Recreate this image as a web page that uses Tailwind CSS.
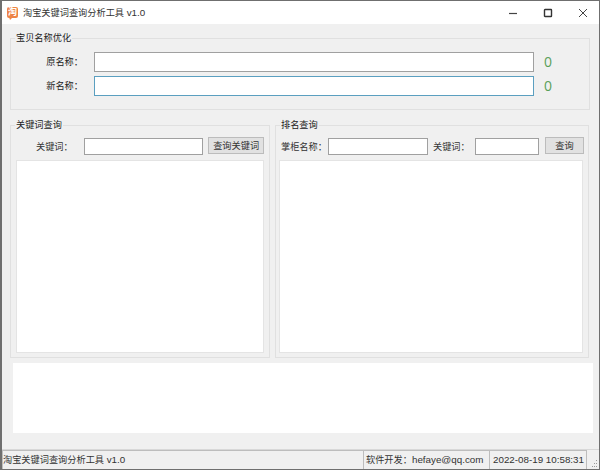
<!DOCTYPE html>
<html lang="zh-CN">
<head>
  <meta charset="UTF-8">
  <title>淘宝关键词查询分析工具 v1.0</title>
  <script src="https://cdn.jsdelivr.net/npm/@tailwindcss/browser@4"></script>
</head>
<body class="m-0 bg-[#f0f0f0]">
  <div class="w-[600px] h-[470px] overflow-hidden flex flex-col bg-[#f0f0f0] border-t border-b border-l-2 border-r border-[#6f6f6f] text-[9.2px] leading-[12px] text-[#222] font-['Liberation_Sans','Noto_Sans_CJK_SC',sans-serif]">

    <!-- title bar -->
    <div class="h-[23px] shrink-0 bg-white flex items-center">
      <div class="relative ml-[5px] w-[11px] h-[11px] rounded-[2px] bg-[#ee8446] flex items-center justify-center text-white text-[9px] leading-[11px] font-bold">
        淘
        <svg class="absolute left-[2px] top-[10px] w-[4px] h-[3px]" viewBox="0 0 4 3"><path d="M0 0h4L1 3z" fill="#ee8446"/></svg>
      </div>
      <div class="ml-[5px] text-[#333]">淘宝关键词查询分析工具 <span class="text-[9.8px]">v1.0</span></div>
      <div class="ml-auto flex items-center">
        <svg class="w-[10px] h-[10px] mr-[25px]" viewBox="0 0 10 10"><path d="M1 5.5h8" stroke="#444" stroke-width="1.2" fill="none"/></svg>
        <svg class="w-[10px] h-[10px] mr-[25px]" viewBox="0 0 10 10"><rect x="1.5" y="1.5" width="7" height="7" rx="0.5" stroke="#333" stroke-width="1.4" fill="none"/></svg>
        <svg class="w-[10px] h-[10px] mr-[11px]" viewBox="0 0 10 10"><path d="M1 1l8 8M9 1l-8 8" stroke="#444" stroke-width="1" fill="none"/></svg>
      </div>
    </div>

    <!-- 宝贝名称优化 -->
    <div class="relative mt-[14px] ml-[8px] mr-[9px] h-[72px] shrink-0 border border-[#e0e0e0] flex flex-col gap-[4px] pt-[13px]">
      <span class="absolute left-[4px] top-[-7px] px-[1px] bg-[#f0f0f0]">宝贝名称优化</span>
      <div class="flex items-center h-[20px]">
        <span class="w-[72px] text-right">原名称：</span>
        <div class="ml-[11px] w-[440px] h-[20px] bg-white border border-[#a0a0a0]"></div>
        <span class="ml-[10px] text-[14px] text-[#5a9f5a] font-['Open_Sans',sans-serif]">0</span>
      </div>
      <div class="flex items-center h-[20px]">
        <span class="w-[72px] text-right">新名称：</span>
        <div class="ml-[11px] w-[440px] h-[20px] bg-white border border-[#5b9fc0]"></div>
        <span class="ml-[10px] text-[14px] text-[#5a9f5a] font-['Open_Sans',sans-serif]">0</span>
      </div>
    </div>

    <!-- 查询区 -->
    <div class="mt-[15px] ml-[8px] flex gap-[5px] h-[233px] shrink-0">
      <div class="relative w-[260px] border border-[#e0e0e0] flex flex-col pt-[11px] px-[5px]">
        <span class="absolute left-[4px] top-[-7px] px-[1px] bg-[#f0f0f0]">关键词查询</span>
        <div class="flex items-center h-[19px] text-[#333]">
          <span class="ml-[20px] w-[48px]">关键词：</span>
          <div class="w-[120px] h-[17px] bg-white border border-[#a0a0a0]"></div>
          <div class="ml-[5px] mb-[2px] w-[56px] h-[17px] bg-[#e1e1e1] border border-[#bcbcbc] flex items-center justify-center">查询关键词</div>
        </div>
        <div class="mt-[4px] h-[193px] w-[248px] bg-white border border-[#e4e4e4]"></div>
      </div>
      <div class="relative w-[314px] border border-[#e0e0e0] flex flex-col pt-[11px] px-[3px]">
        <span class="absolute left-[4px] top-[-7px] px-[1px] bg-[#f0f0f0]">排名查询</span>
        <div class="flex items-center h-[19px] text-[#333]">
          <span class="ml-[2px] w-[47px]">掌柜名称：</span>
          <div class="w-[100px] h-[17px] bg-white border border-[#a0a0a0]"></div>
          <span class="ml-[5px] w-[42px]">关键词：</span>
          <div class="w-[64px] h-[17px] bg-white border border-[#a0a0a0]"></div>
          <div class="ml-[6px] mb-[2px] w-[39px] h-[17px] bg-[#e1e1e1] border border-[#bcbcbc] flex items-center justify-center">查询</div>
        </div>
        <div class="mt-[4px] h-[193px] w-[304px] bg-white border border-[#e4e4e4]"></div>
      </div>
    </div>

    <!-- 日志框 -->
    <div class="mt-[5px] ml-[11px] w-[580px] h-[70px] shrink-0 bg-white"></div>

    <!-- 状态栏 -->
    <div class="mt-auto h-[20px] shrink-0 flex border-t border-[#d8d8d8] text-[#333]">
      <div class="w-[361px] border-l border-t border-[#bdbdbd] flex items-center pl-[0px]"><span>淘宝关键词查询分析工具 <span class="text-[9.8px]">v1.0</span></span></div>
      <div class="w-[126px] border-l border-t border-[#bdbdbd] flex items-center pl-[2px]"><span>软件开发：<span class="text-[9.8px]">hefaye@qq.com</span></span></div>
      <div class="w-[98px] border-l border-t border-r border-[#bdbdbd] flex items-center pl-[3px] text-[9.8px]">2022-08-19 10:58:31</div>
      <svg class="ml-auto self-end w-[10px] h-[10px]" viewBox="0 0 10 10" fill="#9a9a9a"><rect x="7" y="1" width="1" height="1"/><rect x="5" y="4" width="1" height="1"/><rect x="7" y="4" width="1" height="1"/><rect x="3" y="7" width="1" height="1"/><rect x="5" y="7" width="1" height="1"/><rect x="7" y="7" width="1" height="1"/></svg>
    </div>
  </div>
</body>
</html>
